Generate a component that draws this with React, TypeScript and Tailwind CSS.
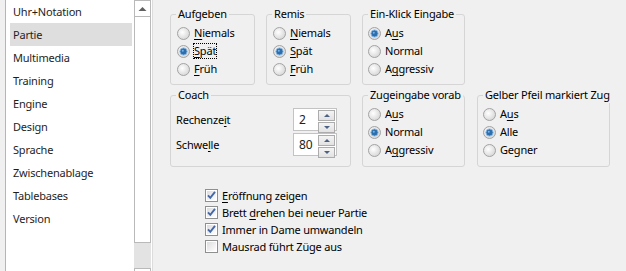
import type { ReactNode } from 'react';

function Radio({ checked }: { checked?: boolean }) {
  return (
    <svg width="13" height="13" viewBox="0 0 13 13" className="shrink-0">
      <defs>
        <radialGradient id="radioFill" cx="0.4" cy="0.4" r="0.7">
          <stop offset="0" stopColor="#ffffff" />
          <stop offset="1" stopColor="#d2d2d2" />
        </radialGradient>
      </defs>
      <circle cx="6.5" cy="6.5" r="6" fill="url(#radioFill)" stroke="#a3a3a3" />
      {checked && (
        <>
          <circle cx="6.5" cy="6.5" r="3.6" fill="#2b6fae" stroke="#8ab8e0" strokeWidth="1" />
          <circle cx="5.8" cy="5.8" r="1" fill="#7db3e6" />
        </>
      )}
    </svg>
  );
}

function Checkbox({ checked }: { checked?: boolean }) {
  return (
    <svg width="13" height="13" viewBox="0 0 13 13" className="shrink-0">
      <defs>
        <linearGradient id="checkFill" x1="0" y1="0" x2="1" y2="1">
          <stop offset="0" stopColor="#dcdcdc" />
          <stop offset="1" stopColor="#ffffff" />
        </linearGradient>
      </defs>
      <rect x="0.5" y="0.5" width="12" height="12" fill="#ffffff" stroke="#8e8f8f" />
      <rect x="2" y="2" width="9" height="9" fill="url(#checkFill)" />
      {checked && (
        <path d="M3 6.3 L5.3 8.8 L10 2.8" fill="none" stroke="#4467a8" strokeWidth="1.9" />
      )}
    </svg>
  );
}

function U({ children }: { children: ReactNode }) {
  return <span className="underline underline-offset-[2px]">{children}</span>;
}

function RadioRow({ checked, focus, children }: { checked?: boolean; focus?: boolean; children: ReactNode }) {
  return (
    <div className="flex h-[18px] items-center gap-[3px] whitespace-nowrap">
      <Radio checked={checked} />
      <span className={focus ? 'border border-dotted border-black leading-[14px]' : 'px-px'}>{children}</span>
    </div>
  );
}

function Group({ title, className, children }: { title: string; className: string; children: ReactNode }) {
  return (
    <fieldset className={`min-w-0 rounded-[3px] border border-[#d5d5d5] ${className}`}>
      <legend className="ml-[5px] whitespace-nowrap px-[2px] leading-[16px]">{title}</legend>
      {children}
    </fieldset>
  );
}

function Spin({ value }: { value: string }) {
  return (
    <div className="flex h-[23px] w-[44px] border border-[#c3c3c3] bg-white">
      <div className="flex-1 pl-[5px] text-[12px] leading-[21px] text-[#222]">{value}</div>
      <div className="flex w-[18px] flex-col gap-px py-px pr-px">
        {['M3 6 L6 3 L9 6 Z', 'M3 3 L6 6 L9 3 Z'].map((d) => (
          <div key={d} className="flex flex-1 items-center justify-center border border-[#acacac] bg-gradient-to-b from-[#f4f4f4] to-[#e2e2e2]">
            <svg width="12" height="9" viewBox="0 0 12 9">
              <path d={d} fill="#4d6185" />
            </svg>
          </div>
        ))}
      </div>
    </div>
  );
}

const pages = ['Uhr+Notation', 'Partie', 'Multimedia', 'Training', 'Engine', 'Design', 'Sprache', 'Zwischenablage', 'Tablebases', 'Version'];

export default function App() {
  return (
    <div className="flex h-[271px] w-[626px] overflow-hidden bg-[#f0f0f0] font-['Segoe_UI','Noto_Sans',sans-serif] text-[11px] leading-[16px] tracking-[-0.2px] text-black">
      {/* Seitenliste */}
      <div className="ml-[5px] flex h-full border-x border-l-[#b5b5b5] border-r-[#dcdcdc] bg-white pr-px">
        <div className="w-[128px] pl-[4px] pr-[2px]">
          {pages.map((p) => (
            <div key={p} className={`flex h-[23px] items-center pl-[3px] text-[#1e1e1e] ${p === 'Partie' ? 'bg-[#dedede]' : ''}`}>
              {p}
            </div>
          ))}
        </div>
        <div className="flex w-[17px] flex-col">
          <div className="flex h-[17px] shrink-0 items-center justify-center border border-[#b9b9b9] bg-white">
            <svg width="9" height="6" viewBox="0 0 9 6">
              <path d="M0.5 5 L4.5 1 L8.5 5 Z" fill="#606060" />
            </svg>
          </div>
          <div className="h-[226px] shrink-0 border-x border-b border-[#b9b9b9] bg-white" />
          <div className="h-[25px] shrink-0 bg-[#e3e3e3]" />
          <div className="h-[17px] shrink-0 border border-[#b9b9b9] bg-white" />
        </div>
      </div>

      {/* Einstellungen */}
      <div className="flex-1 pl-[17px] pt-[6px]">
        <div className="flex gap-[11px]">
          <Group title="Aufgeben" className="h-[79px] w-[85px]">
            <div className="pl-[6px] pt-[2px]">
              <RadioRow><U>N</U>iemals</RadioRow>
              <RadioRow checked focus><U>S</U>pät</RadioRow>
              <RadioRow><U>F</U>rüh</RadioRow>
            </div>
          </Group>
          <Group title="Remis" className="h-[79px] w-[85px]">
            <div className="pl-[6px] pt-[2px]">
              <RadioRow><U>N</U>iemals</RadioRow>
              <RadioRow checked><U>S</U>pät</RadioRow>
              <RadioRow><U>F</U>rüh</RadioRow>
            </div>
          </Group>
          <Group title="Ein-Klick Eingabe" className="h-[79px] w-[103px]">
            <div className="pl-[5px] pt-[2px]">
              <RadioRow checked>A<U>u</U>s</RadioRow>
              <RadioRow>Normal</RadioRow>
              <RadioRow>A<U>g</U>gressiv</RadioRow>
            </div>
          </Group>
        </div>

        <div className="mt-[2px] flex">
          <Group title="Coach" className="h-[80px] w-[181px]">
            <div className="flex flex-col gap-[2px] pl-[5px] pr-[13px] pt-[5px]">
              <div className="flex items-center justify-between">
                <span>Rechenze<U>i</U>t</span>
                <Spin value="2" />
              </div>
              <div className="flex items-center justify-between">
                <span>Schwe<U>l</U>le</span>
                <Spin value="80" />
              </div>
            </div>
          </Group>
          <Group title="Zugeingabe vorab" className="ml-[11px] h-[80px] w-[103px]">
            <div className="pl-[5px] pt-[2px]">
              <RadioRow>A<U>u</U>s</RadioRow>
              <RadioRow checked>Normal</RadioRow>
              <RadioRow>A<U>g</U>gressiv</RadioRow>
            </div>
          </Group>
          <Group title="Gelber Pfeil markiert Zug" className="ml-[12px] h-[80px] w-[133px]">
            <div className="pl-[5px] pt-[2px]">
              <RadioRow>A<U>u</U>s</RadioRow>
              <RadioRow checked>Alle</RadioRow>
              <RadioRow>Gegner</RadioRow>
            </div>
          </Group>
        </div>

        <div className="ml-[35px] mt-[20px] flex flex-col">
          {[
            { on: true, label: <><U>E</U>röffnung zeigen</> },
            { on: true, label: <>Brett <U>d</U>rehen bei neuer Partie</> },
            { on: true, label: <>Immer in Dame umwandeln</> },
            { on: false, label: <>Mausrad führt Züge aus</> },
          ].map((c, i) => (
            <div key={i} className="flex h-[17px] items-center gap-[4px] whitespace-nowrap">
              <Checkbox checked={c.on} />
              <span>{c.label}</span>
            </div>
          ))}
        </div>
      </div>
    </div>
  );
}
